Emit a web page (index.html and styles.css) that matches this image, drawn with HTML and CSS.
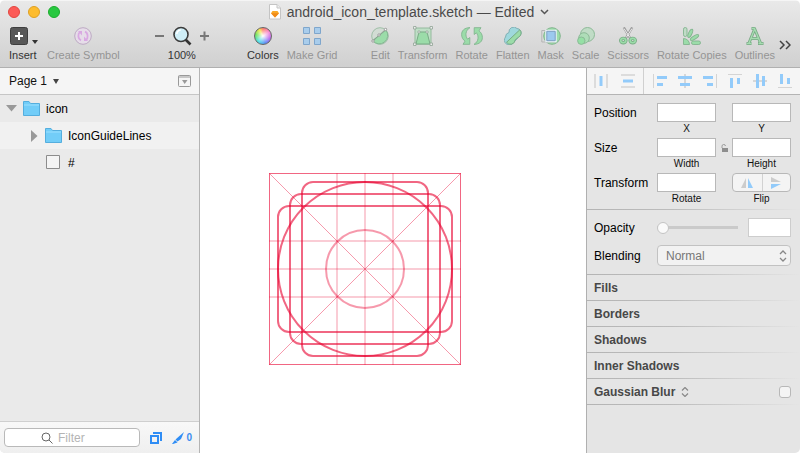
FILE: index.html
```html
<!DOCTYPE html>
<html lang="en">
<head>
<meta charset="utf-8">
<title>android_icon_template.sketch</title>
<link rel="stylesheet" href="styles.css">
</head>
<body>
<div class="window">
  <header class="titlebar">
    <div class="title-row">
      <div class="lights">
        <button class="light close" aria-label="Close"></button>
        <button class="light minimize" aria-label="Minimize"></button>
        <button class="light zoom" aria-label="Zoom"></button>
      </div>
      <h1 class="title">
        <svg width="12" height="16" viewBox="0 0 12 16"><path d="M.5.5h7.500l3.500 3.500v11H.5z" fill="#fff" stroke="#c4c4c4"/><path d="M8 .5v3.500h3.500" fill="#eee" stroke="#c4c4c4"/><path d="M3.500 7h5L10 9.200 6 13.500 2 9.200z" fill="#f9a825"/><path d="M2 9.200h8L6 13.500z" fill="#f08a18"/></svg>
        <span>android_icon_template.sketch — Edited</span>
        <svg width="9" height="6" viewBox="0 0 9 6"><path d="M1 1l3.500 3.500L8 1" fill="none" stroke="#555" stroke-width="1.500"/></svg>
      </h1>
    </div>
    <nav class="toolbar">
      <div class="tools">
        <button class="tool insert">
          <svg width="30" height="18" viewBox="0 0 30 18"><rect x="1.500" y=".5" width="17" height="17" rx="2" fill="#575757" stroke="#3e3e3e"/><path d="M6 9h8M10 5v8" stroke="#fff" stroke-width="2"/><path d="M23 13h6l-3 4z" fill="#333"/></svg>
          <span>Insert</span></button>
        <button class="tool off">
          <svg width="18" height="18" viewBox="0 0 18 18"><circle cx="9" cy="9" r="8.300" fill="#e6dde9" stroke="#bda9c4"/><path d="M7 13.300C3.700 12 3.700 6.500 6 5M11 4.700c3.300 1.300 3.300 6.800 1 8.300" fill="none" stroke="#d9a9e2" stroke-width="1.800"/><path d="M4 4h4v4.500zM14 14h-4V9.500z" fill="#d9a9e2"/></svg>
          <span>Create Symbol</span></button>
      </div>
      <div class="zoomer">
        <button class="step" aria-label="Zoom out"><svg width="9" height="18" viewBox="0 0 9 18"><path d="M0 9h9" stroke="#777" stroke-width="2"/></svg></button>
        <button class="tool">
          <svg width="20" height="20" viewBox="0 0 20 20"><path d="M13 13l5.500 5.500" stroke="#333" stroke-width="2.600"/><circle cx="9" cy="8.500" r="7" fill="#cfeef7" stroke="#3b3b3b" stroke-width="1.600"/><path d="M4.800 8a4 4 0 0 1 4-4" fill="none" stroke="#fff" stroke-width="1.500"/></svg>
          <span>100%</span></button>
        <button class="step" aria-label="Zoom in"><svg width="9" height="18" viewBox="0 0 9 18"><path d="M0 9h9M4.500 4.500v9" stroke="#777" stroke-width="2"/></svg></button>
      </div>
      <div class="tools">
        <button class="tool"><i class="wheel"></i><span>Colors</span></button>
        <button class="tool off">
          <svg width="18" height="18" viewBox="0 0 18 18" fill="#a9cdec" stroke="#7fa6cc"><path d="M.5.5h6v6h-6zM11.500.5h6v6h-6zM.5 11.500h6v6h-6zM11.500 11.500h6v6h-6z"/></svg>
          <span>Make Grid</span></button>
      </div>
      <div class="tools end">
        <button class="tool off">
          <svg width="18" height="18" viewBox="0 0 18 18"><circle cx="9" cy="9" r="8.300" fill="#d2dcd4" stroke="#9fbfa7"/><path d="M1.500 13.500L15 3.200a8.300 8.300 0 1 1-13.500 10.300z" fill="#9bdca9" stroke="#84b792"/><path d="M2 14L15.500 1.500" stroke="#8a9d8e"/><g fill="#fff" stroke="#999"><circle cx="2" cy="14" r="1.200"/><circle cx="8" cy="8" r="1.200"/><circle cx="14.500" cy="2.500" r="1.200"/></g></svg>
          <span>Edit</span></button>
        <button class="tool off">
          <svg width="20" height="20" viewBox="0 0 20 20"><path d="M2 2h16v16H2z" fill="#bfdfc6" stroke="#94ba9d"/><path d="M6 6h8l3 12H3z" fill="#9bdca9" stroke="#79ab86"/><g fill="#eee" stroke="#91a395" stroke-width=".8"><path d="M.5.5h2.500v2.500H.5zM17 .5h2.500v2.500H17zM.5 17h2.500v2.500H.5zM17 17h2.500v2.500H17z"/><circle cx="6" cy="6" r="1.200"/><circle cx="14" cy="6" r="1.200"/></g></svg>
          <span>Transform</span></button>
        <button class="tool off">
          <svg width="22" height="18" viewBox="0 0 22 18" fill="#9bdca9" stroke="#82b48e" stroke-width=".9"><path d="M9 .6C3 .8.6 4 .6 7.500c0 3 1.500 5.200 3.400 6.700L2 17.300h6.800V10.500L6.600 12.200C4 9 4.200 3.500 9 .6z"/><path d="M13 17.400c6-.2 8.400-3.400 8.400-6.900 0-3-1.500-5.200-3.400-6.700L20 .7h-6.800v6.800l2.200-1.700c2.600 3.200 2.400 8.700-2.400 11.600z"/></svg>
          <span>Rotate</span></button>
        <button class="tool off">
          <svg width="18" height="18" viewBox="0 0 18 18"><path d="M5 5.500A4.700 4.700 0 0 1 13 1.500a4.300 4.300 0 0 1 3.500 6.500L9 16.200A4.700 4.700 0 0 1 1.500 10 4.700 4.700 0 0 1 5 5.500z" fill="#9fd8dd" stroke="#82b0b5"/><path d="M15.800 2.800a4.600 4.600 0 0 1-1.300 7.400l-3.300 2.600a4.800 4.800 0 0 1-8.700 2.500z" fill="#9bdca9" stroke="#79ab86"/></svg>
          <span>Flatten</span></button>
        <button class="tool off">
          <svg width="20" height="18" viewBox="0 0 20 18"><circle cx="11" cy="9" r="8.300" fill="#9bdca9" stroke="#82b48e"/><path d="M.8 3.500h13.700v11.500H.8z" fill="none" stroke="#b5b5b5"/><path d="M5 3.500h10v11H5z" fill="#9cc9ef" stroke="#e9f2f7" stroke-width="1.500"/><path d="M5.800 4.300h8.400v9.400H5.800z" fill="none" stroke="#7d9fc2"/></svg>
          <span>Mask</span></button>
        <button class="tool off">
          <svg width="18" height="18" viewBox="0 0 18 18" stroke="#8cba97"><circle cx="10.500" cy="7.500" r="7" fill="#c0dcc6"/><circle cx="7" cy="11" r="5.300" fill="#aeddb8"/><circle cx="4.300" cy="13.700" r="3.700" fill="#95e0a5"/></svg>
          <span>Scale</span></button>
        <button class="tool off">
          <svg width="18" height="18" viewBox="0 0 18 18"><path d="M4.800.5l6.500 11M13.200.5l-6.500 11" stroke="#999" stroke-width="2.400"/><path d="M5 1.500l5.800 9M13 1.500l-5.800 9" stroke="#eee"/><g fill="none" stroke="#7aae87" stroke-width="3.400"><ellipse cx="4.300" cy="13.600" rx="2.600" ry="2.200"/><ellipse cx="13.700" cy="13.600" rx="2.600" ry="2.200"/></g><g fill="none" stroke="#9bdca9" stroke-width="1.600"><ellipse cx="4.300" cy="13.600" rx="2.600" ry="2.200"/><ellipse cx="13.700" cy="13.600" rx="2.600" ry="2.200"/></g></svg>
          <span>Scissors</span></button>
        <button class="tool off">
          <svg width="18" height="18" viewBox="0 0 18 18" fill="#9bdca9" stroke="#82b48e" stroke-width=".9"><path d="M.5 11.500a6 6 0 0 1 6 6h-6z"/><rect x=".5" y=".5" width="3.500" height="9" rx="1.700" fill="#c0dcc6"/><ellipse cx="7.300" cy="6.300" rx="1.700" ry="4.500" transform="rotate(25 7.300 6.300)"/><ellipse cx="11.500" cy="10.500" rx="1.700" ry="4.800" transform="rotate(58 11.500 10.500)"/><rect x="8.500" y="14" width="9" height="3.500" rx="1.700"/></svg>
          <span>Rotate Copies</span></button>
        <button class="tool off">
          <svg width="18" height="18" viewBox="0 0 18 18" fill="none"><path d="M.5 16.500h5M12 16.500h5.500M3 16L8.700 2 14.500 16M5.500 11.500h7M5.500 1.500h4" stroke="#79a985" stroke-width="3"/><path d="M1 16.500h4.500M12.500 16.500H17M3 16L8.700 2 14.500 16M5.500 11.500h7M6 1.500h3" stroke="#a5dcb0" stroke-width="1.300"/></svg>
          <span>Outlines</span></button>
      </div>
      <button class="more" aria-label="More tools"><svg width="12" height="10" viewBox="0 0 12 10"><path d="M1 1l4 4-4 4M7 1l4 4-4 4" fill="none" stroke="#444" stroke-width="1.500"/></svg></button>
    </nav>
  </header>

  <main class="workspace">
    <aside class="sidebar">
      <div class="pages">
        <button class="page-menu">Page 1 <svg width="6" height="5" viewBox="0 0 6 5"><path d="M0 0h6L3 5z" fill="#444"/></svg></button>
        <button class="page-toggle" aria-label="Show pages"><svg width="13" height="12" viewBox="0 0 13 12"><rect x=".5" y=".5" width="12" height="11" rx="1" fill="none" stroke="#999"/><path d="M0 2h13" stroke="#999"/><path d="M4 5h5.500L6.700 9z" fill="#999"/></svg></button>
      </div>
      <ul class="layers">
        <li class="layer">
          <svg width="11" height="7" viewBox="0 0 11 7"><path d="M0 0h11L5.500 6.500z" fill="#999"/></svg>
          <svg width="17" height="15" viewBox="0 0 17 15"><path d="M.5.5h5.500l1.500 2h9v12H.5z" fill="#72cdf8" stroke="#55aede"/><path d="M1 4h15" stroke="#9ce0ff"/></svg>
          <span>icon</span></li>
        <li class="layer child alt">
          <svg width="11" height="12" viewBox="0 0 11 12"><path d="M3 0l6.500 6L3 12z" fill="#999"/></svg>
          <svg width="17" height="15" viewBox="0 0 17 15"><path d="M.5.5h5.500l1.500 2h9v12H.5z" fill="#72cdf8" stroke="#55aede"/><path d="M1 4h15" stroke="#9ce0ff"/></svg>
          <span>IconGuideLines</span></li>
        <li class="layer child">
          <svg width="11" height="12"></svg>
          <svg width="17" height="15" viewBox="0 0 17 15"><path d="M1.500.5h13v13h-13z" fill="#f4f4f4" stroke="#8c8c8c"/></svg>
          <span>#</span></li>
      </ul>
      <footer class="filterbar">
        <label class="filter">
          <svg width="12" height="12" viewBox="0 0 12 12"><circle cx="5" cy="5" r="4" fill="none" stroke="#666"/><path d="M8 8l3.500 3.500" stroke="#666"/></svg>
          <input type="text" placeholder="Filter" aria-label="Filter">
        </label>
        <button aria-label="Filter shapes"><svg width="12" height="12" viewBox="0 0 12 12" fill="none" stroke="#2f8df5"><path d="M3 1h8v8" stroke-width="2"/><path d="M1 4h7v7H1z" stroke-width="2"/></svg></button>
        <button class="slices" aria-label="Filter slices"><svg width="12" height="12" viewBox="0 0 12 12"><path d="M12 0L3.500 7.500 5.500 9.500 9 7z" fill="#2f8df5"/><path d="M0 12l3-4 2.500 2.500L1 12z" fill="#2f8df5"/></svg><span>0</span></button>
      </footer>
    </aside>

    <section class="canvas" aria-label="Canvas">
      <svg width="192" height="192" viewBox="0 0 192 192" fill="none" stroke="#e8002f">
        <g stroke-width="2" opacity=".2"><path d="M68 0v192M96 0v192M124 0v192"/></g>
        <g stroke-width="2" opacity=".2"><path d="M0 68h192M0 96h192M0 124h192"/></g>
        <path d="M0 0l192 192M192 0L0 192" opacity=".4"/>
        <circle cx="96" cy="96" r="39" stroke-width="2" opacity=".4"/>
        <rect x=".5" y=".5" width="191" height="191" opacity=".6"/>
        <g stroke-width="2">
          <circle cx="96" cy="96" r="87" opacity=".6"/>
          <rect x="9" y="33" width="174" height="126" rx="11" opacity=".6"/>
          <rect x="21" y="21" width="150" height="150" rx="11" opacity=".6"/>
          <rect x="33" y="9" width="126" height="174" rx="11" opacity=".6"/>
        </g>
      </svg>
    </section>

    <aside class="inspector">
      <div class="align">
        <div class="distribute">
          <button aria-label="Distribute horizontally"><svg width="14" height="14" viewBox="0 0 14 14"><path d="M1 0v14M13 0v14" stroke="#d4d4d4" stroke-width="1.500"/><path d="M7 2v10" stroke="#93cbfa" stroke-width="3"/></svg></button>
          <button aria-label="Distribute vertically"><svg width="14" height="14" viewBox="0 0 14 14"><path d="M0 1h14M0 13h14" stroke="#d4d4d4" stroke-width="1.500"/><path d="M2 7h10" stroke="#93cbfa" stroke-width="3"/></svg></button>
        </div>
        <div class="edges">
          <button aria-label="Align left"><svg width="14" height="14" viewBox="0 0 14 14"><path d="M.5 0v14" stroke="#d4d4d4"/><path d="M4 3.500h10M4 10.500h6" stroke="#93cbfa" stroke-width="3"/></svg></button>
          <button aria-label="Align horizontal centers"><svg width="14" height="14" viewBox="0 0 14 14"><path d="M7 0v14" stroke="#ccc" stroke-width="1.500"/><path d="M0 3.500h14M2 10.500h10" stroke="#93cbfa" stroke-width="3"/></svg></button>
          <button aria-label="Align right"><svg width="14" height="14" viewBox="0 0 14 14"><path d="M13.500 0v14" stroke="#d4d4d4"/><path d="M0 3.500h10M4 10.500h6" stroke="#93cbfa" stroke-width="3"/></svg></button>
          <button aria-label="Align top"><svg width="14" height="14" viewBox="0 0 14 14"><path d="M0 .5h14" stroke="#d4d4d4"/><path d="M3.500 4v10M10.500 4v6" stroke="#93cbfa" stroke-width="3"/></svg></button>
          <button aria-label="Align vertical centers"><svg width="14" height="14" viewBox="0 0 14 14"><path d="M0 7h14" stroke="#ccc" stroke-width="1.500"/><path d="M4.500 0v14M10.500 2v10" stroke="#93cbfa" stroke-width="3"/></svg></button>
          <button aria-label="Align bottom"><svg width="14" height="14" viewBox="0 0 14 14"><path d="M0 13.500h14" stroke="#d4d4d4"/><path d="M3.500 0v10M10.500 4v6" stroke="#93cbfa" stroke-width="3"/></svg></button>
        </div>
      </div>

      <div class="geometry">
        <span class="name">Position</span>
        <div class="field"><input id="x" type="text"><label for="x">X</label></div>
        <div class="field last"><input id="y" type="text"><label for="y">Y</label></div>
        <span class="name">Size</span>
        <div class="field"><input id="w" type="text"><label for="w">Width</label></div>
        <button class="lock" aria-label="Lock proportions"><svg width="7" height="8" viewBox="0 0 7 8"><path d="M1 4V2.500a1.500 1.500 0 0 1 3.500-.5" fill="none" stroke="#999"/><path d="M1 4h6v4H1z" fill="#8e8e8e"/></svg></button>
        <div class="field last"><input id="h" type="text"><label for="h">Height</label></div>
        <span class="name">Transform</span>
        <div class="field"><input id="r" type="text"><label for="r">Rotate</label></div>
        <div class="field last">
          <div class="flip">
            <button aria-label="Flip horizontally"><svg width="14" height="12" viewBox="0 0 14 12"><path d="M6 1v10H1z" fill="#ccc"/><path d="M8 1v10h5z" fill="#93cbfa"/></svg></button>
            <button aria-label="Flip vertically"><svg width="12" height="12" viewBox="0 0 12 12"><path d="M1 0v5h10z" fill="#ccc"/><path d="M1 12V7h10z" fill="#93cbfa"/></svg></button>
          </div>
          <span class="caption">Flip</span>
        </div>
      </div>

      <div class="appearance">
        <label for="opacity">Opacity</label>
        <div class="opacity">
          <input id="opacity" type="range" value="0">
          <input type="text" aria-label="Opacity value">
        </div>
        <label for="blend">Blending</label>
        <div class="blend">
          <select id="blend"><option>Normal</option></select>
          <svg width="8" height="12" viewBox="0 0 8 12"><path d="M1 4l3-3 3 3M1 8l3 3 3-3" fill="none" stroke="#888" stroke-width="1.300"/></svg>
        </div>
      </div>

      <h2 class="section">Fills</h2>
      <h2 class="section">Borders</h2>
      <h2 class="section">Shadows</h2>
      <h2 class="section">Inner Shadows</h2>
      <div class="section">
        <label for="blur">Gaussian Blur</label>
        <svg width="8" height="10" viewBox="0 0 8 10"><path d="M1 3.500l3-3 3 3M1 6.500l3 3 3-3" fill="none" stroke="#888" stroke-width="1.200"/></svg>
        <input id="blur" type="checkbox">
      </div>
      <div class="section empty"></div>
    </aside>
  </main>
</div>
</body>
</html>
```
FILE: styles.css
```css
* { box-sizing: border-box; }
body {
  margin: 0;
  background: #fff;
  color: #111;
  font: 12px/16px "Liberation Sans", Arial, sans-serif;
}
button, input, select { font: inherit; color: inherit; margin: 0; }
button { padding: 0; border: 0; background: none; }
svg { display: block; flex: none; }
h1, h2, ul { margin: 0; padding: 0; }

.window {
  display: flex;
  flex-direction: column;
  min-height: 100vh;
  border-radius: 5px;
  overflow: hidden;
}

/* Title bar and toolbar */
.titlebar {
  background: linear-gradient(#e9e9e9, #d0d0d0);
  border-top: 1px solid #f5f5f5;
  border-bottom: 1px solid #b0b0b0;
}
.title-row {
  display: grid;
  grid-template-columns: 1fr auto 1fr;
  align-items: center;
  height: 22px;
  padding: 0 0 0 8px;
}
.lights { display: flex; gap: 8px; }
.light { width: 12px; height: 12px; border-radius: 50%; border: 1px solid; }
.close { background: #fc5b57; border-color: #e2463f; }
.minimize { background: #fdbc2e; border-color: #dfa023; }
.zoom { background: #28c840; border-color: #1bac2c; }
.title {
  display: flex;
  align-items: center;
  gap: 6px;
  padding-left: 10px;
  color: #4a4a4a;
  font-size: 14px;
  font-weight: normal;
}
.toolbar {
  display: flex;
  align-items: flex-start;
  height: 44px;
  padding: 4px 9px 0;
}
.tools { display: flex; gap: 8px; }
.tools + .zoomer { margin-left: 35px; }
.zoomer { display: flex; gap: 4px; }
.zoomer + .tools { margin-left: 38px; }
.toolbar .end { margin-left: auto; }
.tool {
  display: grid;
  grid-template-rows: 18px 14px;
  row-gap: 3px;
  place-items: center;
  color: #333;
  font-size: 11px;
  line-height: 14px;
  white-space: nowrap;
}
.insert { justify-items: start; }
.step { height: 18px; }
.off { color: #949494; }
.wheel {
  width: 18px;
  height: 18px;
  border: 1px solid #666;
  border-radius: 50%;
  background:
    radial-gradient(circle, #fff, transparent 65%),
    conic-gradient(#ff7a6a, #f58bd8 60deg, #b76cf0 110deg, #5b8cf5 160deg, #4fe0e8 220deg, #6fe25a 280deg, #f4e54c 330deg, #ff7a6a);
}
.more { margin: 13px 0 0 4px; }

.workspace { flex: 1; display: flex; }

/* Layer list */
.sidebar {
  display: flex;
  flex-direction: column;
  width: 200px;
  background: #eaeaea;
  border-right: 1px solid #b4b4b4;
}
.pages {
  display: flex;
  justify-content: space-between;
  align-items: center;
  height: 27px;
  padding: 0 8px 0 9px;
  background: #f5f5f5;
  border-bottom: 1px solid #c6c6c6;
}
.page-menu { display: flex; align-items: center; gap: 6px; }
.layers { flex: 1; list-style: none; }
.layer {
  display: flex;
  align-items: center;
  gap: 6px;
  height: 27px;
  padding-left: 6px;
}
.layer span { color: #000; }
.child { padding-left: 28px; }
.alt { background: #f1f1f1; }
.filterbar {
  display: flex;
  align-items: center;
  gap: 10px;
  height: 32px;
  padding: 0 7px 0 4px;
  background: linear-gradient(#f8f8f8, #efefef);
  border-top: 1px solid #cfcfcf;
}
.filter {
  flex: 1;
  display: flex;
  align-items: center;
  gap: 5px;
  min-width: 0;
  height: 19px;
  padding-left: 36px;
  background: #fff;
  border: 1px solid #b9b9b9;
  border-radius: 4px;
}
.filter input {
  flex: 1;
  min-width: 0;
  padding: 0;
  border: 0;
  background: none;
  outline: 0;
}
.filter input::placeholder { color: #b4b4b4; }
.slices {
  display: flex;
  align-items: center;
  gap: 2px;
  color: #3d8df0;
  font-size: 10px;
  font-weight: bold;
}

/* Canvas */
.canvas {
  flex: 1;
  min-width: 0;
  padding: 105px 0 0 69px;
  background: #fff;
}

/* Inspector */
.inspector {
  width: 214px;
  background: #e5e5e5;
  border-left: 1px solid #b0b0b0;
}
.align {
  display: flex;
  height: 27px;
  background: #f5f5f5;
  border-bottom: 1px solid #b4b4b4;
}
.distribute, .edges { display: grid; justify-items: center; align-items: center; }
.distribute {
  grid-template-columns: 1fr 1fr;
  width: 57px;
  padding-right: 2px;
  border-right: 1px solid #d0d0d0;
}
.edges { flex: 1; grid-template-columns: repeat(6, 1fr); padding: 0 3px 0 4px; }

.geometry {
  display: grid;
  grid-template-columns: 63px 1fr 16px 1fr;
  grid-auto-rows: 35px;
  padding: 8px 9px 1px 7px;
}
.geometry .name { grid-column: 1; padding-top: 2px; }
.name, .appearance label { color: #000; }
.field { display: flex; flex-direction: column; align-items: center; grid-column: 2; }
.field.last { grid-column: 4; }
.field label, .caption { color: #111; font-size: 10px; line-height: 14px; }
.lock { display: flex; justify-content: center; padding-top: 6px; grid-column: 3; }
.inspector input[type="text"] {
  width: 100%;
  height: 19px;
  padding: 0 3px;
  background: #fff;
  border: 1px solid #b8b8b8;
  border-radius: 0;
}
.flip {
  display: grid;
  grid-template-columns: 1fr 1fr;
  width: 100%;
  height: 19px;
  background: #f4f4f4;
  border: 1px solid #b8b8b8;
  border-radius: 4px;
}
.flip button { display: flex; align-items: center; justify-content: center; }
.flip button + button { border-left: 1px solid #d2d2d2; }

.appearance {
  display: grid;
  grid-template-columns: 63px 1fr;
  grid-template-rows: 19px 21px;
  row-gap: 8px;
  align-items: center;
  padding: 8px 9px 8px 7px;
}
.appearance, .section {
  border-top: 1px solid;
  border-image: linear-gradient(90deg, #b4b4b4, #bcbcbc 40%, #e5e5e5) 1;
}
.opacity { display: grid; grid-template-columns: 1fr 43px; gap: 10px; align-items: center; }
.inspector .opacity input[type="text"] { border-color: #cdcdcd; }
input[type="range"] {
  appearance: none;
  width: 100%;
  height: 13px;
  background: linear-gradient(#cacaca, #cacaca) center / 100% 3px no-repeat;
}
input[type="range"]::-webkit-slider-thumb {
  appearance: none;
  width: 12px;
  height: 12px;
  border: 1px solid #c4c4c4;
  border-radius: 50%;
  background: #fafafa;
}
.blend { display: grid; align-items: center; }
.blend > * { grid-area: 1 / 1; }
.blend svg { justify-self: end; margin-right: 4px; pointer-events: none; }
.blend select {
  appearance: none;
  width: 100%;
  height: 21px;
  padding: 0 8px;
  color: #777;
  background: #f2f2f2;
  border: 1px solid #c2c2c2;
  border-radius: 4px;
}

.section {
  display: flex;
  align-items: center;
  gap: 6px;
  height: 26px;
  padding: 0 9px 0 7px;
  color: #484848;
  font-size: 12px;
  font-weight: bold;
}
.section input {
  appearance: none;
  width: 12px;
  height: 12px;
  margin-left: auto;
  background: #f4f4f4;
  border: 1px solid #b8b8b8;
  border-radius: 3px;
}
.empty { height: 1px; padding: 0; }
```
